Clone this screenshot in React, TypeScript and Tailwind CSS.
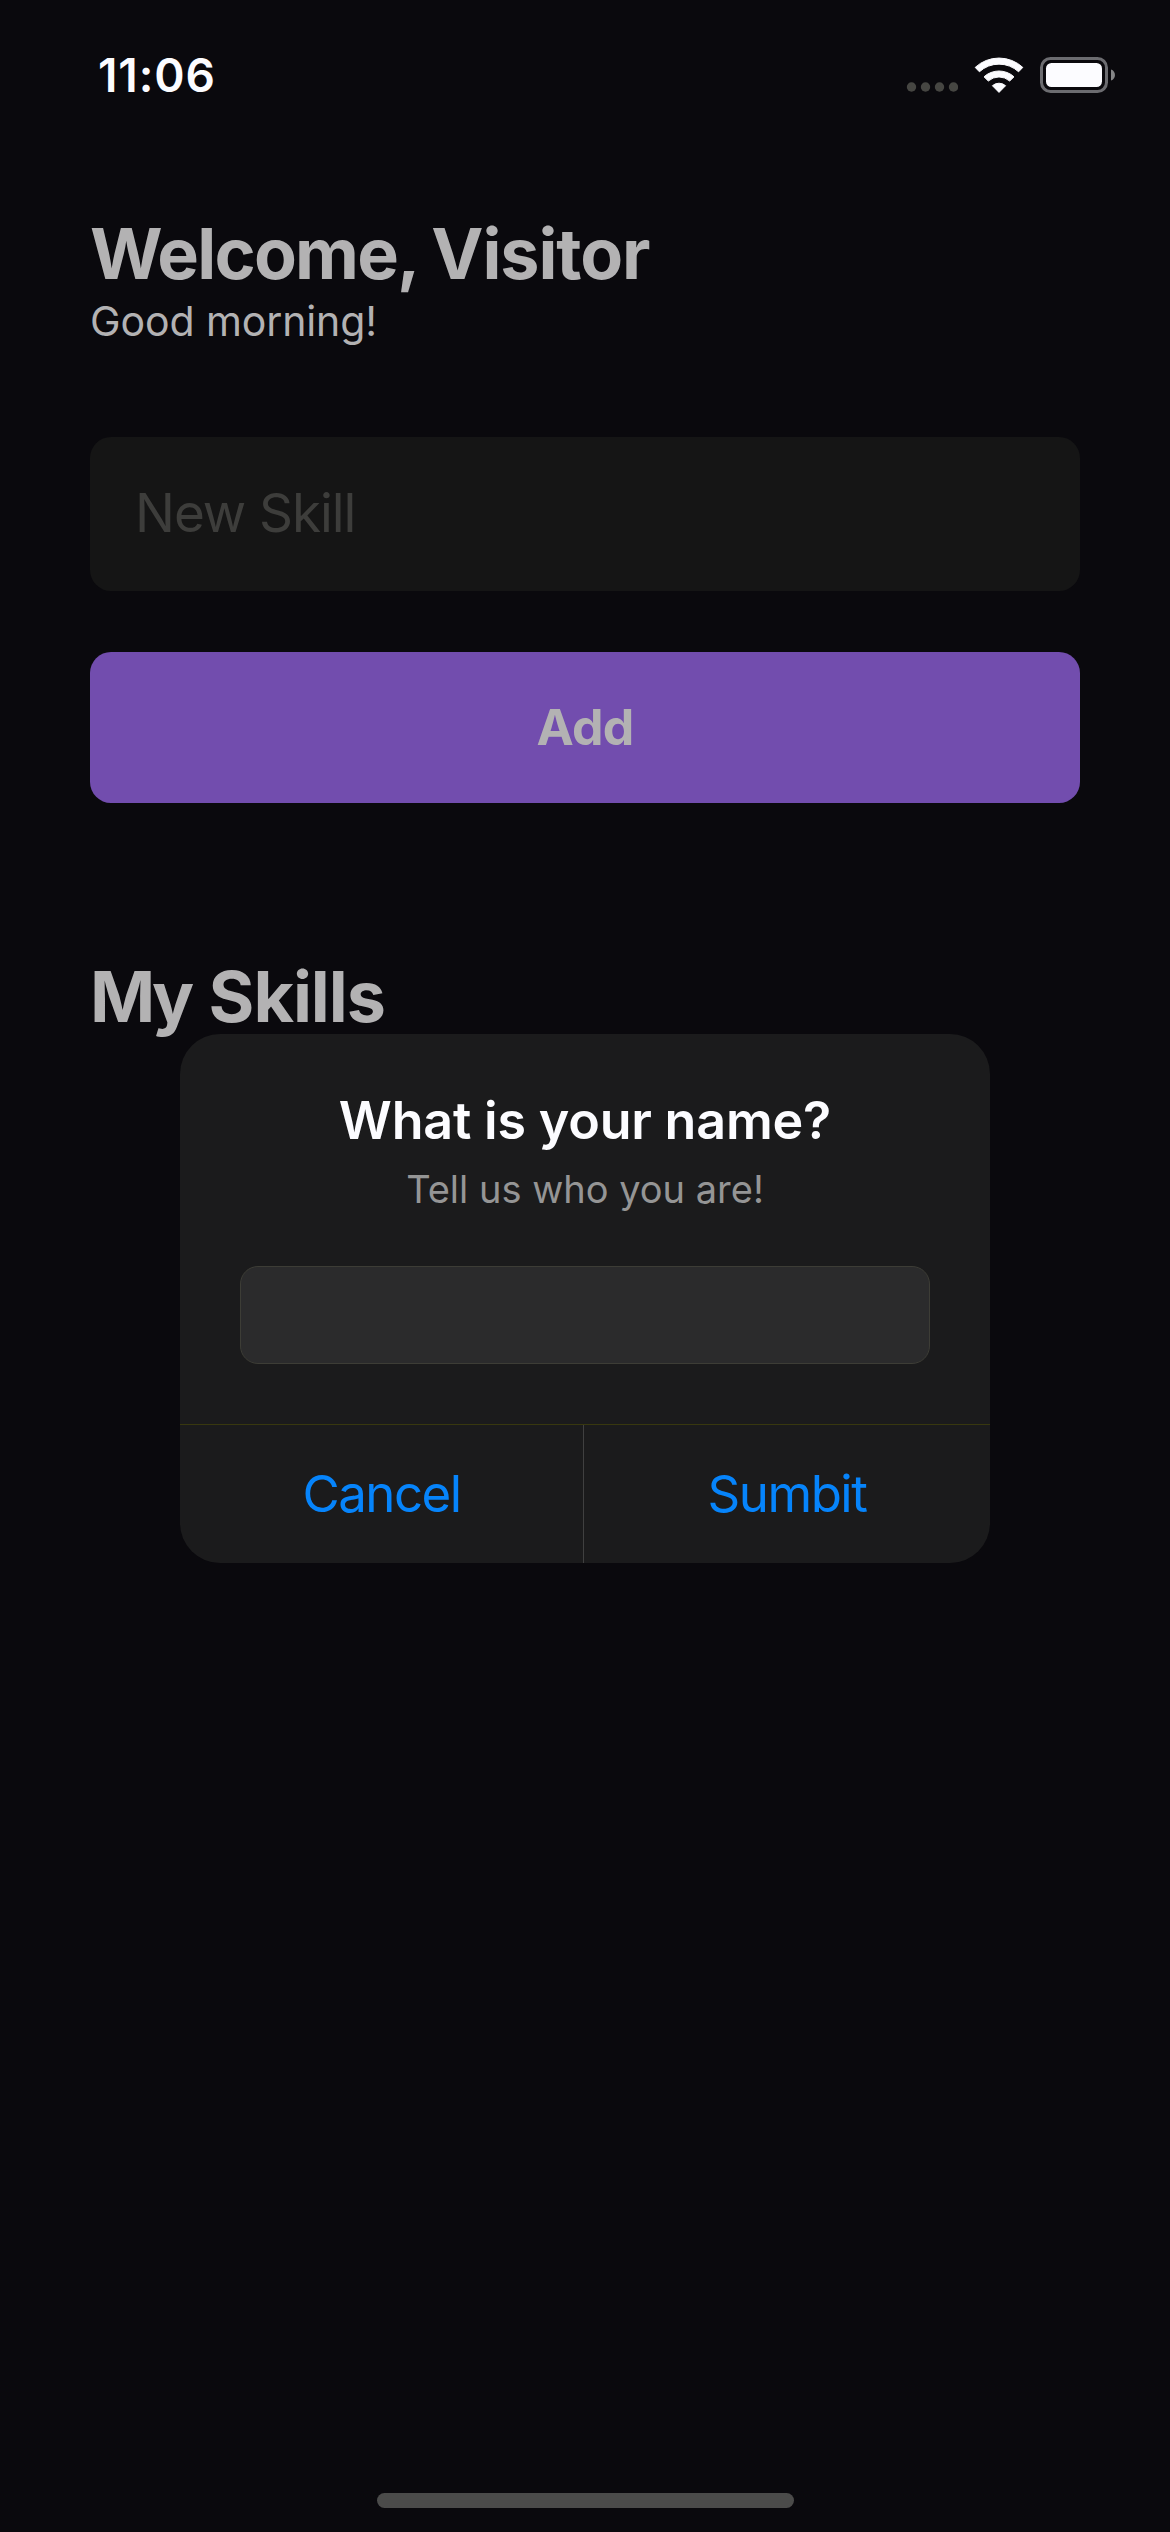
function CellularDots() {
  return (
    <svg width="52" height="12" viewBox="0 0 52 12" fill="#464642">
      <circle cx="5.5" cy="6" r="4.7" />
      <circle cx="19.5" cy="6" r="4.7" />
      <circle cx="33.5" cy="6" r="4.7" />
      <circle cx="47.5" cy="6" r="4.7" />
    </svg>
  );
}

function WifiIcon() {
  return (
    <svg
      width="50"
      height="38"
      viewBox="-25 -37 50 38"
      fill="#fcfcff"
      stroke="#fcfcff"
      strokeWidth="1"
      strokeLinejoin="round"
    >
      <path d="M-23.8 -25.6 A35 35 0 0 1 23.8 -25.6 L19.6 -21.2 A28.9 28.9 0 0 0 -19.6 -21.2 Z" />
      <path d="M-15 -16.2 A22.3 22.3 0 0 1 15 -16.2 L10.7 -12 A16.2 16.2 0 0 0 -10.7 -12 Z" />
      <path d="M-6.6 -7.3 A10 10 0 0 1 6.6 -7.3 L0 -0.6 Z" />
    </svg>
  );
}

function BatteryIcon() {
  return (
    <svg width="76" height="36" viewBox="0 0 76 36">
      <rect x="1.5" y="1.5" width="65" height="33" rx="9" fill="none" stroke="#6c6c70" strokeWidth="3" />
      <rect x="6" y="6" width="56" height="24" rx="5.5" fill="#fcfcff" />
      <path d="M71 12.5 C76.3 14 76.3 22 71 23.5 Z" fill="#858587" />
    </svg>
  );
}

function StatusBar() {
  return (
    <div className="flex h-[149px] shrink-0 items-center justify-between pr-[54px] pl-[98px]">
      <span className="text-[46px] leading-[56px] font-semibold tracking-[0.9px] text-[#fcfcff]">11:06</span>
      <div className="flex items-center">
        <div className="mt-6">
          <CellularDots />
        </div>
        <div className="mr-[16px] ml-[16px]">
          <WifiIcon />
        </div>
        <BatteryIcon />
      </div>
    </div>
  );
}

function NameDialog() {
  return (
    <div className="absolute inset-0 flex flex-col items-center pt-[1034px]">
      <div
        role="dialog"
        className="flex h-[529px] w-[810px] flex-col overflow-hidden rounded-[40px] bg-[#1b1b1c] text-center"
      >
        <h2 className="mt-[55px] text-[52px] leading-[64px] font-semibold tracking-[-0.2px] text-[#fcfcff]">
          What is your name?
        </h2>
        <p className="mt-[13px] text-[38px] leading-[46px] text-[#959595]">Tell us who you are!</p>
        <div className="mx-[60px] mt-[54px] h-[98px] shrink-0 rounded-[18px] border border-[#3d3d36] bg-[#2b2b2c]" />
        <div className="mt-[60px] grid flex-1 grid-cols-[403px_1fr] border-t border-[#38380f] text-[51px] tracking-[-1.5px] text-[#0684fb]">
          <button className="leading-[60px]">Cancel</button>
          <button className="border-l border-[#404040] leading-[60px]">Sumbit</button>
        </div>
      </div>
    </div>
  );
}

export default function App() {
  return (
    <div className="relative flex h-[2532px] w-[1170px] flex-col overflow-hidden bg-[#0a090d] font-['Inter',sans-serif] text-[#b3b2b3]">
      <StatusBar />
      <main className="flex flex-1 flex-col px-[90px] pt-[62px]">
        <h1 className="text-[70px] leading-[85px] font-bold tracking-[-1.78px] whitespace-nowrap">
          Welcome, <span className="tracking-[-1.1px]">Visitor</span>
        </h1>
        <p className="text-[41px] leading-[50px] tracking-[-0.1px]">Good morning!</p>
        <div className="mt-[91px] flex h-[154px] items-center rounded-[21px] bg-[#151515] pl-[45px] text-[53px] tracking-[-1.05px] text-[#3d3d3b]">
          New Skill
        </div>
        <button className="mt-[61px] h-[151px] rounded-[21px] bg-[#724dae] text-[50px] font-bold tracking-[-0.7px]">
          Add
        </button>
        <h2 className="mt-[151px] text-[70px] leading-[85px] font-bold tracking-[-1.05px] [word-spacing:3px]">
          <span className="tracking-[-4px]">My</span> Skills
        </h2>
      </main>
      <NameDialog />
      <div className="mb-[24px] h-[15px] w-[417px] self-center rounded-full bg-[#4b4b4a]" />
    </div>
  );
}
